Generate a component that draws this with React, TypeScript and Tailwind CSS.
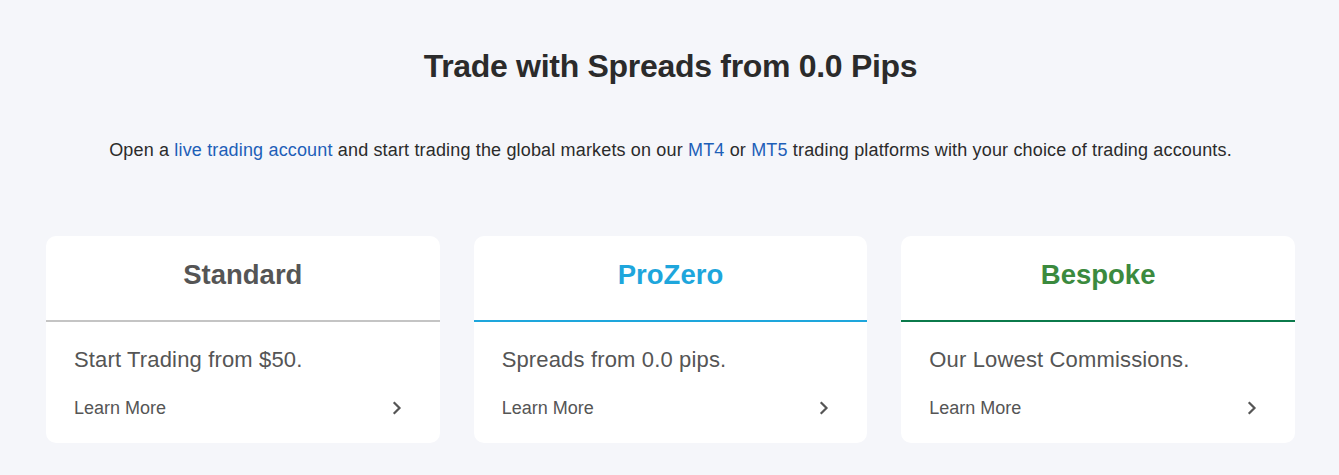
const cards = [
  {
    title: "Standard",
    titleColor: "text-[#555555]",
    line: "border-[#c4c4c4]",
    text: "Start Trading from $50.",
  },
  {
    title: "ProZero",
    titleColor: "text-[#1ea6dc]",
    line: "border-[#1ea6dc]",
    text: "Spreads from 0.0 pips.",
  },
  {
    title: "Bespoke",
    titleColor: "text-[#3b8a3e]",
    line: "border-[#0b7a4b]",
    text: "Our Lowest Commissions.",
  },
]

function Chevron() {
  return (
    <svg width="10" height="14" viewBox="0 0 10 14" fill="none">
      <path d="M2.5 2 L7.5 7 L2.5 12" stroke="#555555" strokeWidth="2.2" strokeLinecap="square" />
    </svg>
  )
}

export default function App() {
  return (
    <div className="min-h-[475px] bg-[#f5f6fa] pl-[46px] pr-[44px] pt-[44px] font-['Liberation_Sans',Arial,sans-serif]">
      {/* Heading */}
      <h2 className="text-center text-[32px] font-bold leading-[44px] tracking-[-0.3px] text-[#2b2b2b]">
        Trade with Spreads from 0.0 Pips
      </h2>
      <p className="mt-[49px] text-center text-[18px] leading-[26px] tracking-[0.16px] text-[#2b2b2b]">
        Open a <a className="text-[#1e5fb8]">live trading account</a> and start trading the global
        markets on our <a className="text-[#1e5fb8]">MT4</a> or <a className="text-[#1e5fb8]">MT5</a> trading
        platforms with your choice of trading accounts.
      </p>

      {/* Account cards */}
      <div className="mt-[73px] grid grid-cols-3 gap-[34px]">
        {cards.map((c) => (
          <div key={c.title} className="h-[207px] rounded-[10px] bg-white">
            <div className={`flex h-[86px] items-center justify-center border-b-2 pb-[6px] ${c.line}`}>
              <span className={`text-[27.5px] font-bold ${c.titleColor}`}>{c.title}</span>
            </div>
            <div className="px-[28px] pt-[24px]">
              <div className="text-[22px] leading-[28px] tracking-[0.15px] text-[#555555]">{c.text}</div>
              <div className="mt-[22px] flex items-center justify-between pr-[10px]">
                <span className="text-[18px] leading-[24px] text-[#555555]">Learn More</span>
                <Chevron />
              </div>
            </div>
          </div>
        ))}
      </div>
    </div>
  )
}
